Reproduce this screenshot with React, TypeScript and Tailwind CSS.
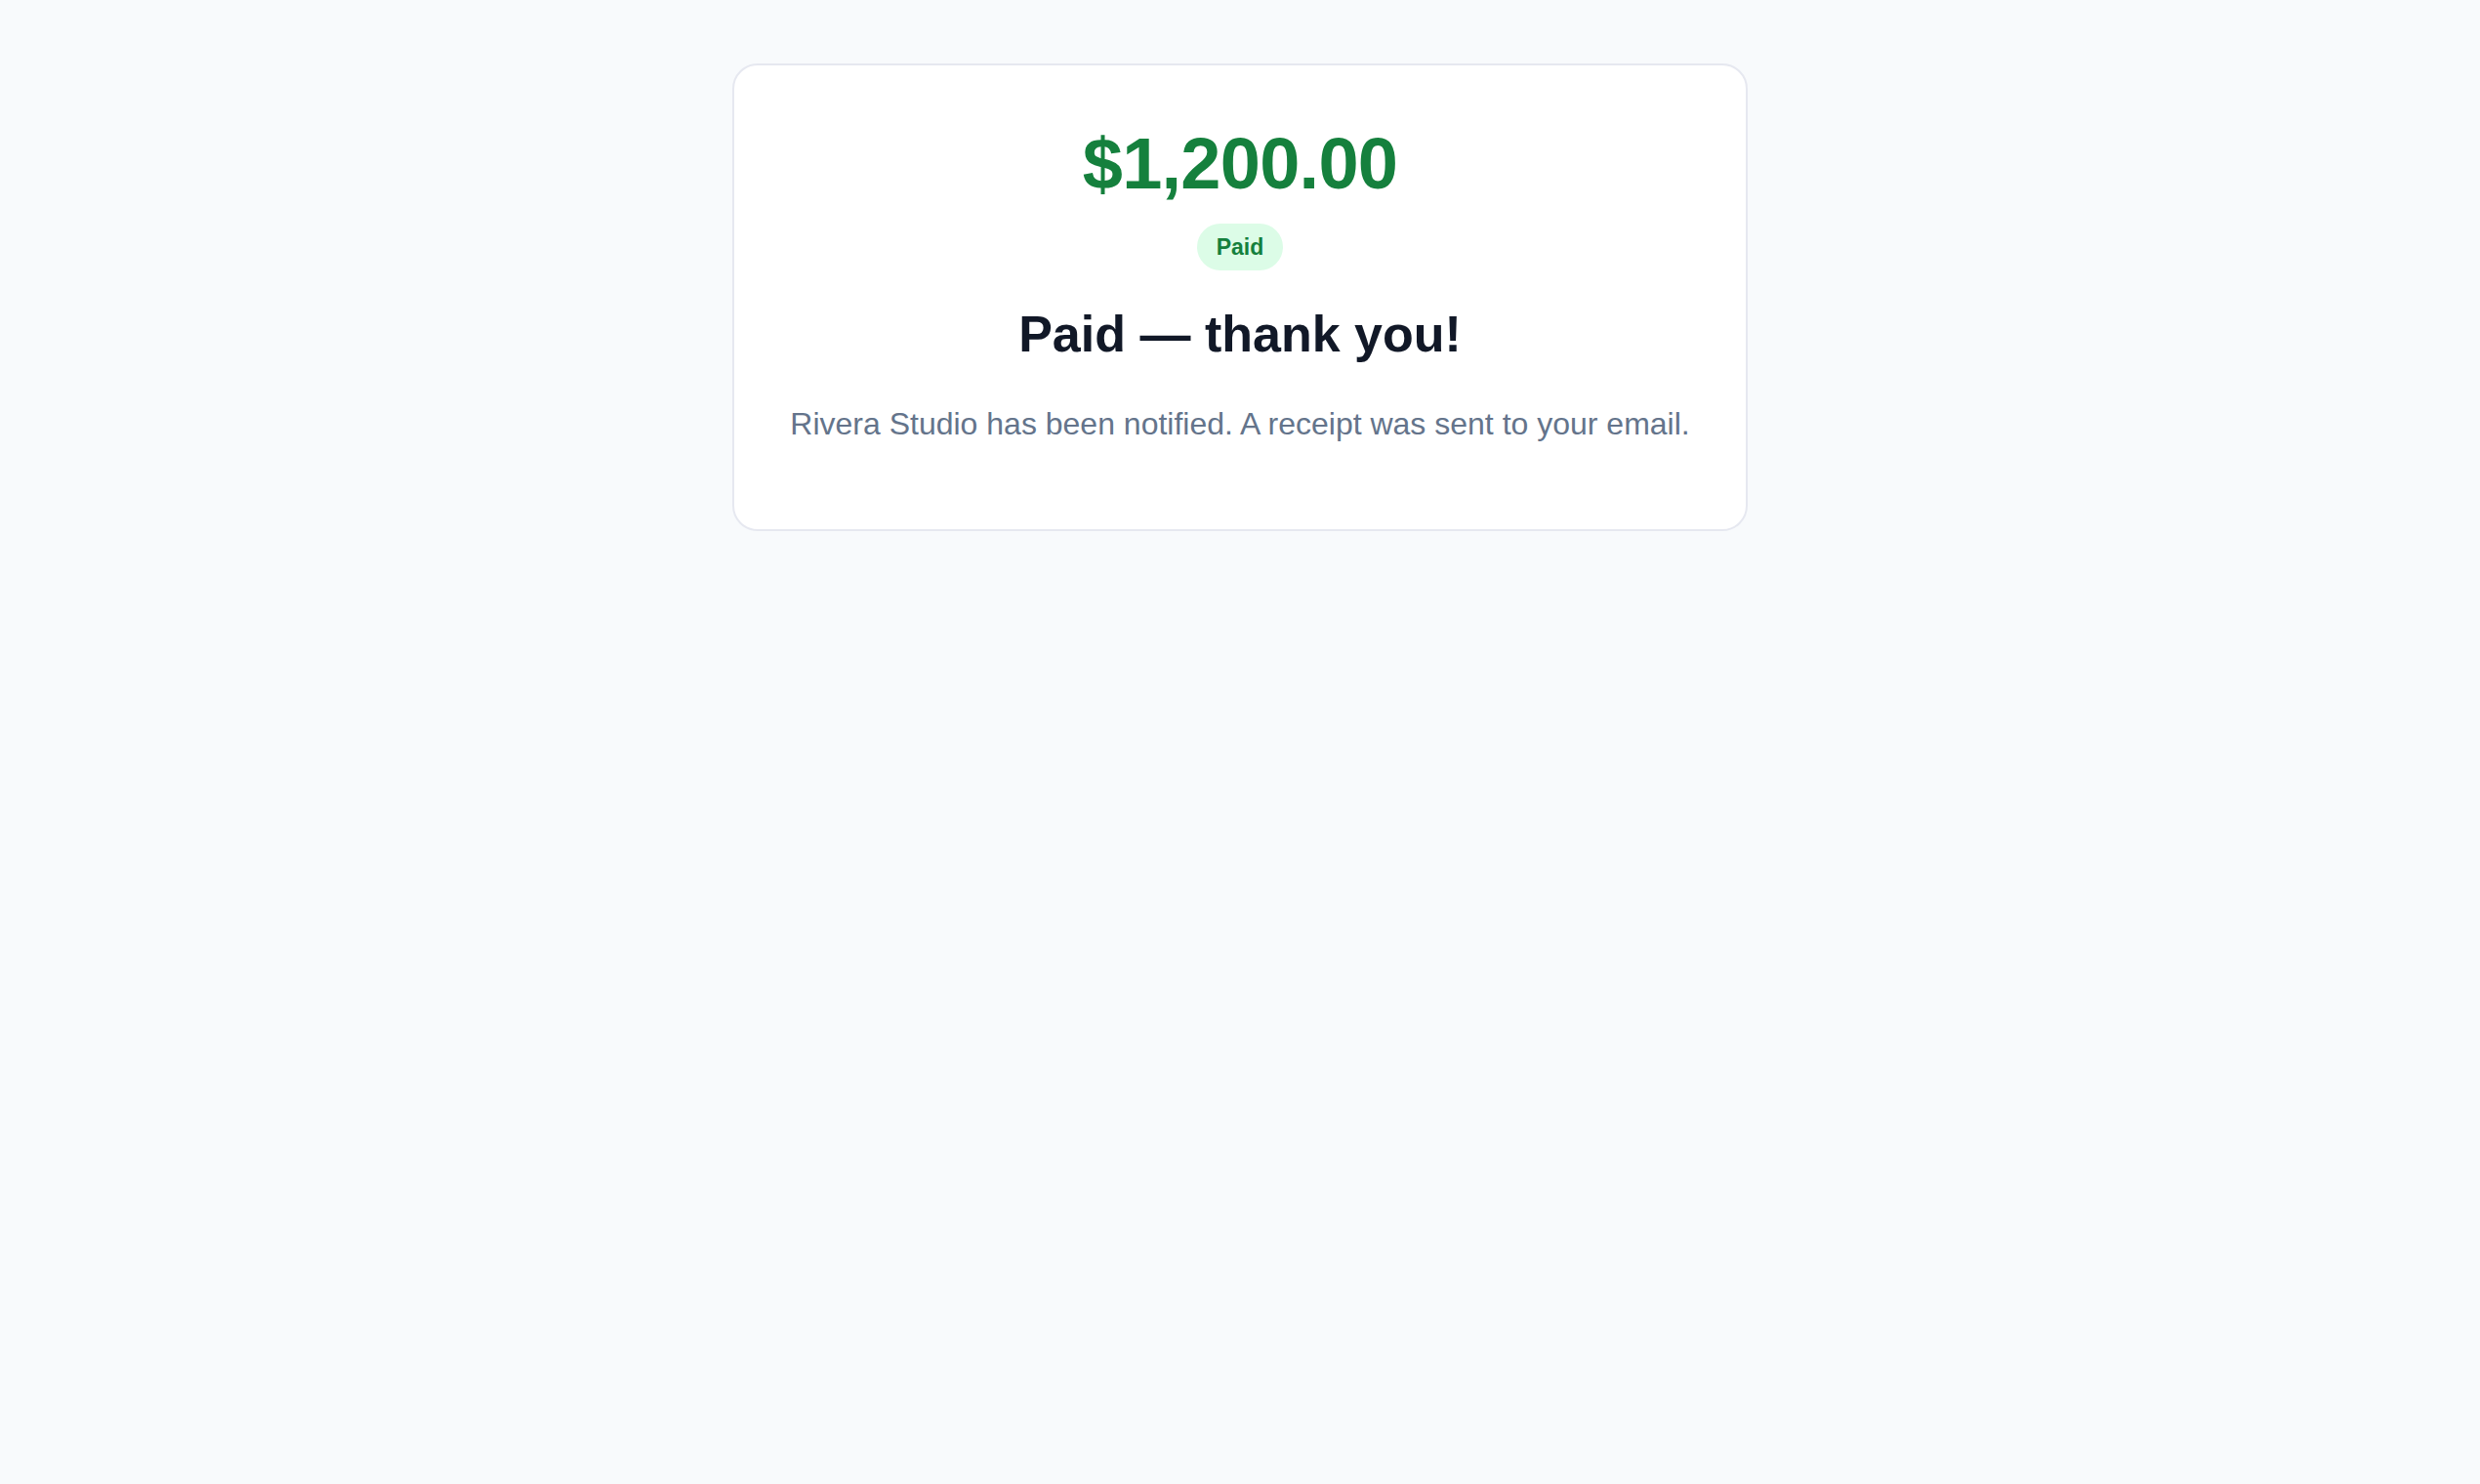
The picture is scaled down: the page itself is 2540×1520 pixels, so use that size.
import React from 'react'

const sans = { fontFamily: '"Liberation Sans", Arial, sans-serif' }

function StatusBadge({ label }: { label: string }) {
  return (
    <span className="inline-flex h-[48px] items-center justify-center rounded-full bg-[#dcfce7] px-[20px] text-[23px] font-bold leading-none text-[#15803d]">
      {label}
    </span>
  )
}

export default function App() {
  const amount = new Intl.NumberFormat('en-US', {
    style: 'currency',
    currency: 'USD',
    minimumFractionDigits: 2,
  }).format(1200)

  return (
    <div className="min-h-screen bg-[#f8fafc] pt-[65px]" style={sans}>
      {/* Payment confirmation card */}
      <div className="mx-auto flex w-[1040px] flex-col items-center rounded-[26px] border-2 border-[#e6e8f0] bg-white pt-[64px] pb-[92px] text-center">
        <div className="text-[74px] font-bold leading-none tracking-[-0.01em] text-[#15803d]">{amount}</div>

        <div className="mt-[24px]">
          <StatusBadge label="Paid" />
        </div>

        <h1 className="mt-[39px] text-[52px] font-bold leading-none text-[#111827]">
          Paid — thank you!
        </h1>

        <p className="mt-[50px] text-[32px] leading-none text-[#64748b]">
          Rivera Studio has been notified. A receipt was sent to your email.
        </p>
      </div>
    </div>
  )
}
